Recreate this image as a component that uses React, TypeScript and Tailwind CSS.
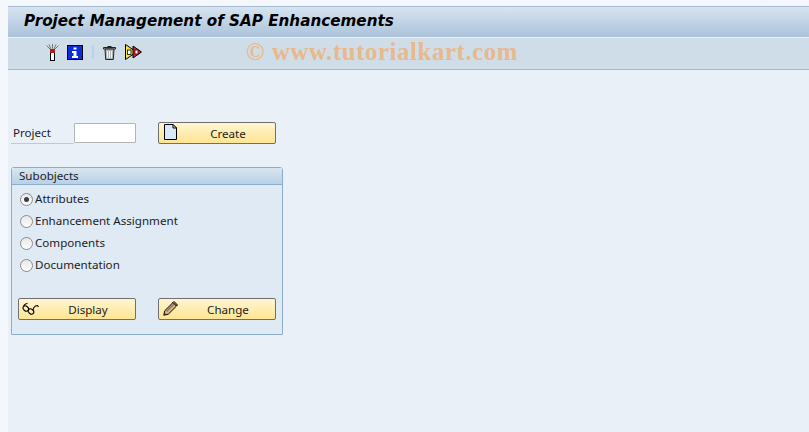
import React from "react";

const uiFont = "font-['Noto_Sans',sans-serif]";

function SapButton({ icon, label, className }: { icon: React.ReactNode; label: string; className?: string }) {
  return (
    <button
      className={`relative flex h-[22px] w-[118px] items-center justify-center rounded-[2px] border border-[#6f6f6f] bg-gradient-to-b from-[#fff6d2] via-[#ffedb0] to-[#fde594] text-[11.600px] leading-none text-[#1c1c1c] ${className ?? ""}`}
    >
      <span className="absolute left-[1px] top-0 flex h-[18px] w-[20px] items-center justify-center">{icon}</span>
      <span className="pl-[22px] pt-[1px]">{label}</span>
    </button>
  );
}

function Radio({ label, checked }: { label: string; checked?: boolean }) {
  return (
    <div className="flex h-[22px] items-center">
      <span className="flex h-[13px] w-[13px] items-center justify-center rounded-full border border-[#8b8b8b] bg-gradient-to-b from-[#e8e8e8] to-[#fdfdfd]">
        {checked && <span className="h-[5px] w-[5px] rounded-full bg-[#3a3a4a]" />}
      </span>
      <span className="ml-[2px] text-[11.600px] text-[#1c1c1c]">{label}</span>
    </div>
  );
}

const DocIcon = () => (
  <svg width="13" height="16" viewBox="0 0 13 16">
    <path d="M.5.5h8.500l3.500 3.500v11.500H.5z" fill="#d8e8f6" stroke="#000" />
    <path d="M9 .5V4h3.500z" fill="#fff" stroke="#000" />
  </svg>
);

const GlassesIcon = () => (
  <svg width="17" height="13" viewBox="0 0 17 13" fill="none" stroke="#000" strokeWidth="1.100">
    <ellipse cx="3.800" cy="6.500" rx="3" ry="2.300" transform="rotate(40 3.800 6.500)" />
    <ellipse cx="9" cy="9.500" rx="3" ry="2.300" transform="rotate(40 9 9.500)" />
    <path d="M1.300 4.500C2 2.800 3.500 1.500 5.500 1.200M11 8c.5-2.500 2-4.500 5-4.500M15.500 3.500l1 1.500" />
  </svg>
);

const PencilIcon = () => (
  <svg width="15" height="15" viewBox="0 0 15 15">
    <path d="M.8 14.200l1-4.500L10 1.500l3.500 3.500-8.200 8.200z" fill="#f2b260" stroke="#000" />
    <path d="M10 1.500l1-1 3.500 3.500-1 1z" fill="#e88c8c" stroke="#000" />
    <path d="M3.500 10.500l7.500-7.500" stroke="#5a78b8" strokeWidth="1.500" />
    <path d="M.8 14.200l.6-2.600 2 2z" fill="#333" />
  </svg>
);

export default function App() {
  return (
    <div className={`flex h-[432px] w-[809px] flex-col overflow-hidden bg-[#f4f7fb] pl-[8px] pt-[6px] ${uiFont}`}>
      <header className="flex h-[31px] shrink-0 items-center border-y border-[#a9bbd2] border-b-[#afc5dc] bg-gradient-to-b from-[#d7e4f0] to-[#adc4db] pl-[16px]">
        <h1 className="font-['DejaVu_Sans',sans-serif] text-[15.200px] font-bold italic leading-none text-black">
          Project Management of SAP Enhancements
        </h1>
      </header>

      <div className="flex h-[33px] shrink-0 items-center border-y border-b-[#a9b9cf] border-t-[#e8eff6] bg-[#cfdde9] pb-[3px] pl-[38px]">
        <svg width="13" height="17" viewBox="0 0 13 17">
          <path d="M.5 1.500l3.500 3.500M12.500 1.500L9 5M3 .5l2 4.500M10 .5L8 5M6.500 0v4.500" stroke="#777" fill="none" />
          <rect x="4.500" y="6.500" width="4" height="10" fill="#fff" stroke="#000" />
          <rect x="4" y="5" width="5" height="4" fill="#b01c1c" />
        </svg>
        <svg className="ml-[8px]" width="16" height="15" viewBox="0 0 16 15">
          <rect x=".5" y=".5" width="15" height="14" fill="#0a2fd8" stroke="#000" />
          <path d="M6.500 2.500h3v2h-3zM5 6h4.500v5H11v2H5v-2h1.500V8H5z" fill="#fff" />
        </svg>
        <span className="ml-[9px] h-[14px] w-[2px] bg-[#bcd0e4]" />
        <svg className="ml-[9px]" width="13" height="15" viewBox="0 0 13 15">
          <path d="M4.500 1.500h4M.5 2.500h12V4H.5z" fill="#ddd" stroke="#222" />
          <path d="M2 4l.7 10.500h7.600L11 4z" fill="#b4b4b4" stroke="#222" />
          <path d="M4.500 6v7M6.500 6v7M8.500 6v7" stroke="#f2f2f2" />
        </svg>
        <svg className="ml-[9px]" width="17" height="16" viewBox="0 0 17 16">
          <path d="M.5.5l11 7.500-11 7.500z" fill="#f6e83c" stroke="#000" />
          <path d="M8 2l8.500 6L8 14z" fill="#e8202c" stroke="#000" />
          <rect x="2.500" y="6" width="3.500" height="4.500" fill="#fff" stroke="#000" strokeWidth=".8" />
          <rect x="10" y="6" width="3" height="4" fill="#fff" stroke="#000" strokeWidth=".7" />
        </svg>
        <span className="ml-[104px] font-['Liberation_Serif',serif] text-[24.800px] font-bold leading-none tracking-[0.6px] text-[#e8b98a]">
          © www.tutorialkart.com
        </span>
      </div>

      <main className="flex-1 bg-[#e9f0f7] pl-[3px] pt-[52px]">
        <div className="flex items-center">
          <div className="flex h-[21px] w-[63px] items-center border-b border-[#c3c9cf] pl-[2px] pt-[1px] text-[11.600px] text-[#1c1c1c]">Project</div>
          <input className="h-[20px] w-[62px] rounded-[1px] border border-[#b4b4b4] bg-white" />
          <SapButton className="ml-[22px]" icon={<DocIcon />} label="Create" />
        </div>

        <section className="mt-[23px] h-[168px] w-[272px] rounded-t-[3px] border border-[#8cacc9] bg-[#dfeaf4]">
          <div className="flex h-[17px] items-center border-b border-[#8cacc9] bg-gradient-to-b from-[#d8e6f2] to-[#b9d0e6] pb-[1px] pl-[7px] text-[11.600px] text-[#1c1c1c]">
            Subobjects
          </div>
          <div className="pl-[8px] pt-[3px]">
            <Radio label="Attributes" checked />
            <Radio label="Enhancement Assignment" />
            <Radio label="Components" />
            <Radio label="Documentation" />
          </div>
          <div className="ml-[6px] mt-[22px] flex gap-[22px]">
            <SapButton icon={<GlassesIcon />} label="Display" />
            <SapButton icon={<PencilIcon />} label="Change" />
          </div>
        </section>
      </main>
    </div>
  );
}
